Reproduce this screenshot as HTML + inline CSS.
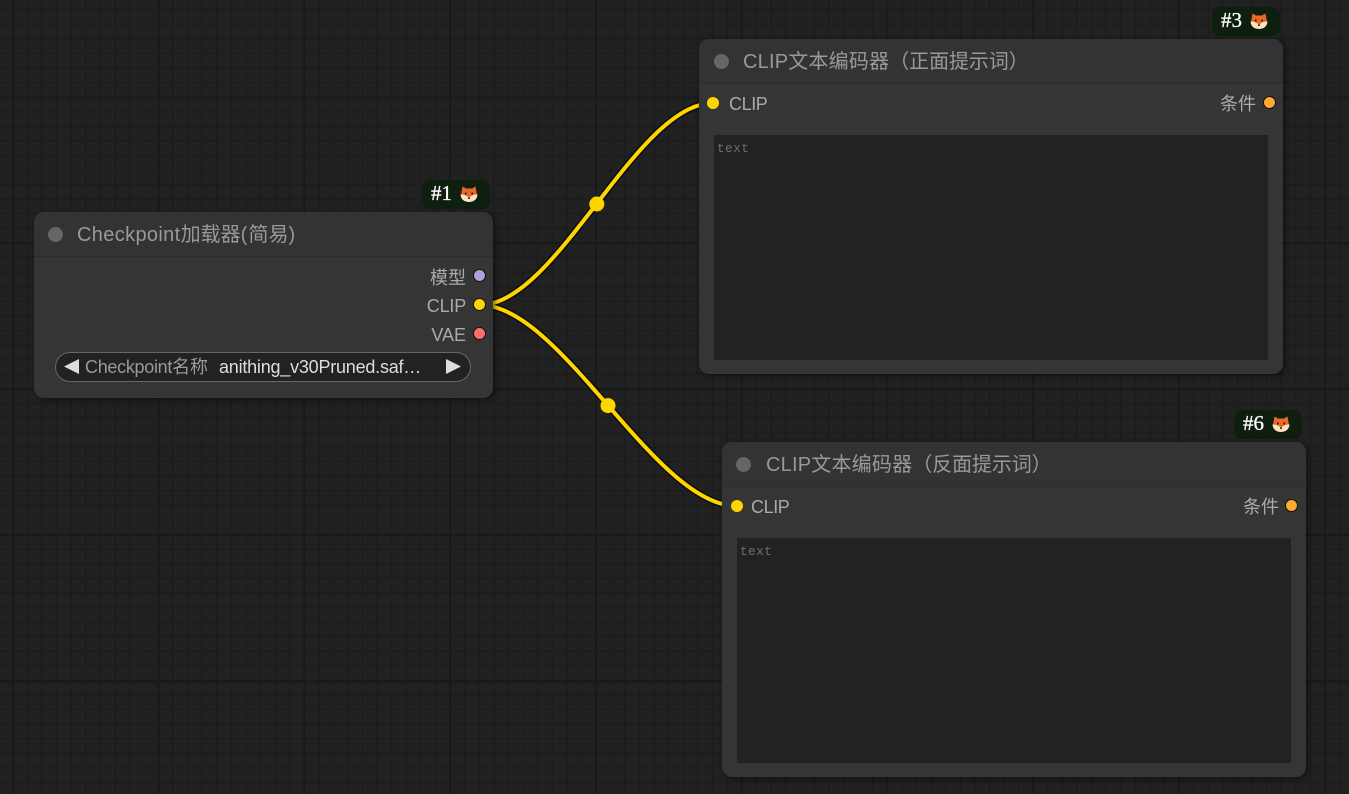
<!DOCTYPE html>
<html><head><meta charset="utf-8"><style>
html,body{margin:0;padding:0;width:1349px;height:794px;overflow:hidden;background:#212121}
body{position:relative;font-family:"Liberation Sans","Noto Sans CJK SC",sans-serif}
svg.bg{position:absolute;left:0;top:0}
.node{position:absolute;background:#353535;border-radius:10px;box-shadow:2px 2px 6px rgba(0,0,0,.5)}
.hd{position:absolute;left:0;right:0;top:0;border-bottom:1px solid #2c2c2c;background:#333;border-radius:10px 10px 0 0}
.dot{position:absolute;width:15px;height:15px;border-radius:50%;background:#666}
.t{position:absolute;white-space:pre;line-height:24px}
.title{font-size:20px;color:#999}
.slot{font-size:18px;color:#aaa}
.port{position:absolute;width:11px;height:11px;border-radius:50%;border:1.5px solid #111;box-sizing:content-box}
.in{width:12px;height:12px;border:0}
.ta{position:absolute;background:#222}
.ta span{position:absolute;left:3px;top:7px;font:12.5px/14px "Liberation Mono","DejaVu Sans Mono",monospace;color:#707070;letter-spacing:.6px}
.badge{position:absolute;height:29px;border-radius:8px;background:#0f1f0f}
.badge b{position:absolute;left:9px;top:0;font:400 21px/26px "Liberation Serif",serif;color:#fff;-webkit-text-stroke:.3px #fff}
.badge svg{position:absolute;left:38px;top:5px}
.combo{position:absolute;left:21px;top:140px;width:414px;height:28px;background:#222;border:1px solid #666;border-radius:15px}
</style></head><body>
<svg class="bg" width="1349" height="794" xmlns="http://www.w3.org/2000/svg">
<defs>
<pattern id="g" x="12.1" y="9" width="14.58" height="14.58" patternUnits="userSpaceOnUse">
<rect x="0" y="0" width="1.3" height="14.58" fill="#1b1b1b"/>
<rect x="0" y="0" width="14.58" height="1.3" fill="#1b1b1b"/>
</pattern>
</defs>
<rect width="1349" height="794" fill="#212121"/>
<rect width="1349" height="794" fill="url(#g)"/>
<g fill="#191919">
<rect x="12" y="0" width="2" height="794"/><rect x="157.5" y="0" width="2" height="794"/><rect x="303.3" y="0" width="2" height="794"/><rect x="449.1" y="0" width="2" height="794"/><rect x="594.9" y="0" width="2" height="794"/><rect x="740.7" y="0" width="2" height="794"/><rect x="886.5" y="0" width="2" height="794"/><rect x="1032.3" y="0" width="2" height="794"/><rect x="1178.1" y="0" width="2" height="794"/><rect x="1323.9" y="0" width="2" height="794"/>
<rect x="0" y="96.5" width="1349" height="2"/><rect x="0" y="242.3" width="1349" height="2"/><rect x="0" y="388.1" width="1349" height="2"/><rect x="0" y="534" width="1349" height="2"/><rect x="0" y="680.8" width="1349" height="2"/>
</g>
<g fill="none" stroke-linecap="round">
<path d="M480 305C557 305 636 103 713 103" stroke="#000" stroke-opacity=".6" stroke-width="7"/>
<path d="M480 305C561 305 655 506 736.5 506" stroke="#000" stroke-opacity=".6" stroke-width="7"/>
<path d="M480 305C557 305 636 103 713 103" stroke="#FFD500" stroke-width="4"/>
<path d="M480 305C561 305 655 506 736.5 506" stroke="#FFD500" stroke-width="4"/>
</g>
<circle cx="596.8" cy="204" r="7.500" fill="#FFD500"/>
<circle cx="608" cy="405.6" r="7.500" fill="#FFD500"/>
</svg>

<div class="badge" style="left:422px;top:180px;width:68px"><b>#1</b><svg width="18" height="18" viewBox="0 0 18 18"><path d="M2.500 1.500L6 3.500h6l3.500-2L17 10 9 16 1 10z" fill="#e8692a"/><path d="M.5 9.500c3 0 6 .5 8.500 3.500 2.500-3 5.500-3.500 8.500-3.500-.3 5-4 7.500-8.500 7.500S.8 14.500.5 9.500z" fill="#fbe3c4"/><rect x="5" y="7.500" width="1.600" height="2" fill="#2a1a10"/><rect x="11.400" y="7.500" width="1.600" height="2" fill="#2a1a10"/><rect x="8" y="12.500" width="2" height="1.500" fill="#3a2a20"/></svg></div>
<div class="node" style="left:34px;top:212px;width:459px;height:186px">
<div class="hd" style="height:44px"></div>
<div class="dot" style="left:14px;top:15px"></div>
<div class="t title" style="left:43px;top:11px"><span style="letter-spacing:.35px">Checkpoint</span>加载器<span style="letter-spacing:1.3px">(</span>简易<span>)</span></div>
<div class="t slot" style="right:27px;top:54px">模型</div>
<div class="t slot" style="right:27px;top:82px;letter-spacing:-.2px">CLIP</div>
<div class="t slot" style="right:27px;top:111px">VAE</div>
<div class="port" style="left:439px;top:57px;background:#b39ddb"></div>
<div class="port" style="left:439px;top:86px;background:#FFD500"></div>
<div class="port" style="left:439px;top:115px;background:#ff6e6e"></div>
<div class="combo">
<svg style="position:absolute;left:8px;top:6px" width="16" height="16"><path d="M0 7.500L15 0V15Z" fill="#ddd"/></svg>
<svg style="position:absolute;right:8px;top:6px" width="16" height="16"><path d="M15 7.500L0 0V15Z" fill="#ddd"/></svg>
<div class="t" style="left:29px;top:2px;font-size:18px;color:#999"><span style="letter-spacing:-.3px">Checkpoint</span>名称</div>
<div class="t" style="left:163px;top:2px;font-size:18px;color:#ddd;letter-spacing:-.22px">anithing_v30Pruned.saf…</div>
</div>
</div>

<div class="badge" style="left:1212px;top:7px;width:68px"><b>#3</b><svg width="18" height="18" viewBox="0 0 18 18"><path d="M2.500 1.500L6 3.500h6l3.500-2L17 10 9 16 1 10z" fill="#e8692a"/><path d="M.5 9.500c3 0 6 .5 8.500 3.500 2.500-3 5.500-3.500 8.500-3.500-.3 5-4 7.500-8.500 7.500S.8 14.500.5 9.500z" fill="#fbe3c4"/><rect x="5" y="7.500" width="1.600" height="2" fill="#2a1a10"/><rect x="11.400" y="7.500" width="1.600" height="2" fill="#2a1a10"/><rect x="8" y="12.500" width="2" height="1.500" fill="#3a2a20"/></svg></div>
<div class="node" style="left:699px;top:39px;width:584px;height:335px">
<div class="hd" style="height:44px"></div>
<div class="dot" style="left:15px;top:15px"></div>
<div class="t title" style="left:44px;top:11px"><span style="letter-spacing:.2px">CLIP文本编码器</span><span style="letter-spacing:-.1px">（正面提示词）</span></div>
<div class="port in" style="left:8px;top:58px;background:#FFD500"></div>
<div class="t slot" style="left:30px;top:53px;letter-spacing:-.4px">CLIP</div>
<div class="t slot" style="right:27px;top:53px">条件</div>
<div class="port" style="left:564px;top:57px;background:#ffa931"></div>
<div class="ta" style="left:15px;top:96px;width:554px;height:225px"><span>text</span></div>
</div>

<div class="badge" style="left:1234px;top:410px;width:68px"><b>#6</b><svg width="18" height="18" viewBox="0 0 18 18"><path d="M2.500 1.500L6 3.500h6l3.500-2L17 10 9 16 1 10z" fill="#e8692a"/><path d="M.5 9.500c3 0 6 .5 8.500 3.500 2.500-3 5.500-3.500 8.500-3.500-.3 5-4 7.500-8.500 7.500S.8 14.500.5 9.500z" fill="#fbe3c4"/><rect x="5" y="7.500" width="1.600" height="2" fill="#2a1a10"/><rect x="11.400" y="7.500" width="1.600" height="2" fill="#2a1a10"/><rect x="8" y="12.500" width="2" height="1.500" fill="#3a2a20"/></svg></div>
<div class="node" style="left:722px;top:442px;width:584px;height:335px">
<div class="hd" style="height:44px"></div>
<div class="dot" style="left:14px;top:15px"></div>
<div class="t title" style="left:44px;top:11px"><span style="letter-spacing:.2px">CLIP文本编码器</span><span style="letter-spacing:-.1px">（反面提示词）</span></div>
<div class="port in" style="left:9px;top:58px;background:#FFD500"></div>
<div class="t slot" style="left:29px;top:53px;letter-spacing:-.4px">CLIP</div>
<div class="t slot" style="right:27px;top:53px">条件</div>
<div class="port" style="left:563px;top:57px;background:#ffa931"></div>
<div class="ta" style="left:15px;top:96px;width:554px;height:225px"><span>text</span></div>
</div>
</body></html>
